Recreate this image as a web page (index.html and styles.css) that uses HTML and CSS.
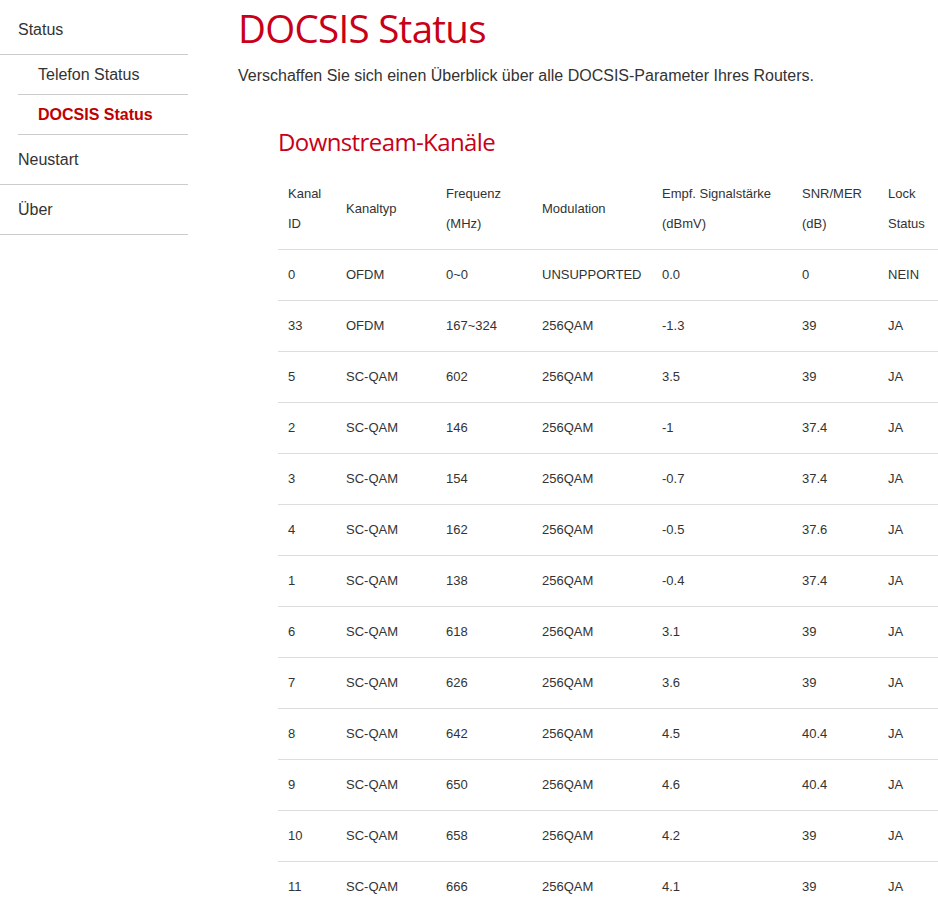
FILE: index.html
```html
<!DOCTYPE html>
<html lang="de">
<head>
<meta charset="utf-8">
<title>DOCSIS Status</title>
<link rel="stylesheet" href="styles.css">
</head>
<body>
<div class="layout">
  <nav class="sidebar">
    <ul class="menu">
      <li class="item top">Status</li>
      <li class="item sub">Telefon Status</li>
      <li class="item sub active">DOCSIS Status</li>
      <li class="item top">Neustart</li>
      <li class="item top">Über</li>
    </ul>
  </nav>
  <main class="content">
    <h1 class="title">DOCSIS Status</h1>
    <p class="intro">Verschaffen Sie sich einen Überblick über alle DOCSIS-Parameter Ihres Routers.</p>
    <section class="section">
      <h2 class="section-title">Downstream-Kanäle</h2>
      <table class="channels">
        <colgroup>
          <col class="c1"><col class="c2"><col class="c3"><col class="c4"><col class="c5"><col class="c6"><col class="c7">
        </colgroup>
        <thead>
          <tr>
            <th>Kanal<br>ID</th>
            <th>Kanaltyp</th>
            <th>Frequenz<br>(MHz)</th>
            <th>Modulation</th>
            <th>Empf. Signalstärke<br>(dBmV)</th>
            <th>SNR/MER<br>(dB)</th>
            <th>Lock<br>Status</th>
          </tr>
        </thead>
        <tbody>
          <tr><td>0</td><td>OFDM</td><td>0~0</td><td>UNSUPPORTED</td><td>0.0</td><td>0</td><td>NEIN</td></tr>
          <tr><td>33</td><td>OFDM</td><td>167~324</td><td>256QAM</td><td>-1.3</td><td>39</td><td>JA</td></tr>
          <tr><td>5</td><td>SC-QAM</td><td>602</td><td>256QAM</td><td>3.5</td><td>39</td><td>JA</td></tr>
          <tr><td>2</td><td>SC-QAM</td><td>146</td><td>256QAM</td><td>-1</td><td>37.4</td><td>JA</td></tr>
          <tr><td>3</td><td>SC-QAM</td><td>154</td><td>256QAM</td><td>-0.7</td><td>37.4</td><td>JA</td></tr>
          <tr><td>4</td><td>SC-QAM</td><td>162</td><td>256QAM</td><td>-0.5</td><td>37.6</td><td>JA</td></tr>
          <tr><td>1</td><td>SC-QAM</td><td>138</td><td>256QAM</td><td>-0.4</td><td>37.4</td><td>JA</td></tr>
          <tr><td>6</td><td>SC-QAM</td><td>618</td><td>256QAM</td><td>3.1</td><td>39</td><td>JA</td></tr>
          <tr><td>7</td><td>SC-QAM</td><td>626</td><td>256QAM</td><td>3.6</td><td>39</td><td>JA</td></tr>
          <tr><td>8</td><td>SC-QAM</td><td>642</td><td>256QAM</td><td>4.5</td><td>40.4</td><td>JA</td></tr>
          <tr><td>9</td><td>SC-QAM</td><td>650</td><td>256QAM</td><td>4.6</td><td>40.4</td><td>JA</td></tr>
          <tr><td>10</td><td>SC-QAM</td><td>658</td><td>256QAM</td><td>4.2</td><td>39</td><td>JA</td></tr>
          <tr><td>11</td><td>SC-QAM</td><td>666</td><td>256QAM</td><td>4.1</td><td>39</td><td>JA</td></tr>
        </tbody>
      </table>
    </section>
  </main>
</div>
</body>
</html>
```

FILE: styles.css
```css
html {
  overflow: hidden;
  background: #fff;
}

body {
  margin: 0;
  font-family: "Liberation Sans", Arial, sans-serif;
  color: #333;
  background: #fff;
}

.layout {
  display: flex;
  align-items: flex-start;
}

.sidebar {
  width: 188px;
  flex: 0 0 188px;
  padding-top: 5px;
}

.menu {
  list-style: none;
  margin: 0;
  padding: 0;
}

.item {
  font-size: 16px;
  color: #333;
  border-bottom: 1px solid #ccc;
}

.item.top {
  line-height: 49px;
  padding-left: 18px;
}

.item.sub {
  line-height: 39px;
  margin-left: 18px;
  padding-left: 20px;
}

.item.active {
  color: #c00000;
  font-weight: bold;
}

.content {
  margin-left: 50px;
  flex: 1;
  min-width: 0;
}

.title {
  margin: 5px 0 0;
  font-family: "Open Sans", "Liberation Sans", sans-serif;
  font-weight: 400;
  font-size: 38.5px;
  line-height: 46px;
  letter-spacing: -0.7px;
  color: #c8001a;
}

.intro {
  margin: 13px 0 0;
  font-size: 16px;
  line-height: 24px;
  color: #333;
}

.section {
  margin-left: 40px;
  margin-top: 37px;
}

.section-title {
  margin: 0;
  font-family: "Open Sans", "Liberation Sans", sans-serif;
  font-weight: 400;
  font-size: 24px;
  line-height: 34px;
  letter-spacing: -0.6px;
  color: #c8001a;
}

.channels {
  margin-top: 10px;
  border-collapse: collapse;
  table-layout: fixed;
  width: 661px;
  font-size: 13px;
  color: #333;
}

.c1 { width: 58px; }
.c2 { width: 100px; }
.c3 { width: 96px; }
.c4 { width: 120px; }
.c5 { width: 140px; }
.c6 { width: 86px; }
.c7 { width: 61px; }

.channels th,
.channels td {
  text-align: left;
  font-weight: normal;
  padding: 10px 10px;
  line-height: 30px;
  border-bottom: 1px solid #ddd;
  white-space: nowrap;
  vertical-align: middle;
}
```
